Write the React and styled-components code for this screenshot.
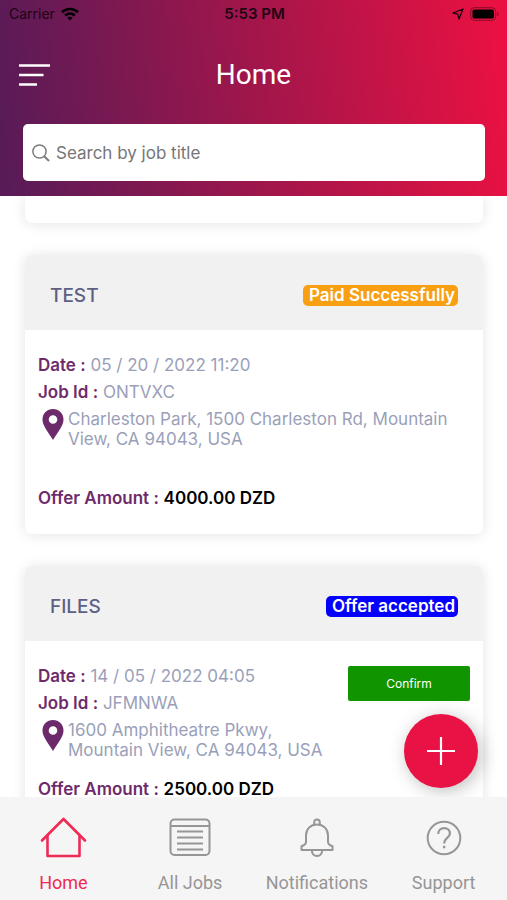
import React, { useState } from "react";
import styled, { createGlobalStyle } from "styled-components";

const jobs = [
  {
    id: "ONTVXC",
    title: "TEST",
    status: "Paid Successfully",
    statusColor: "#f99f12",
    date: "05 / 20 / 2022 11:20",
    address: "Charleston Park, 1500 Charleston Rd, Mountain View, CA 94043, USA",
    amount: "4000.00 DZD",
    canConfirm: false,
  },
  {
    id: "JFMNWA",
    title: "FILES",
    status: "Offer accepted",
    statusColor: "#0500fb",
    date: "14 / 05 / 2022 04:05",
    address: "1600 Amphitheatre Pkwy, Mountain View, CA 94043, USA",
    amount: "2500.00 DZD",
    canConfirm: true,
  },
];

const HomeIcon = () => (
  <svg width="48" height="42" viewBox="0 0 48 42" fill="none" stroke="currentColor" strokeWidth="2.6" strokeLinecap="round" strokeLinejoin="round">
    <path d="M3 23.500 24.500 2 46 23.500" />
    <path d="M8.500 19V39H40.500V19" />
  </svg>
);

const JobsIcon = () => (
  <svg width="42" height="42" viewBox="0 0 42 42" fill="none" stroke="currentColor" strokeWidth="2">
    <rect x="1.500" y="2.500" width="39" height="35.500" rx="4" />
    <path d="M1.500 9h39" />
    <path d="M8 14.500h26M8 20.500h26M8 26.500h26M8 32.500h26" strokeWidth="2.200" />
  </svg>
);

const BellIcon = () => (
  <svg width="36" height="42" viewBox="0 0 36 42" fill="none" stroke="currentColor" strokeWidth="2" strokeLinejoin="round">
    <path d="M15.200 8.500V5.200a2.800 2.800 0 0 1 5.600 0v3.300" />
    <path d="M18 7.500c-6.500 0-11 4.600-11 11v6.500c0 2-1 3-4.500 4.200v3.800h31v-3.800C30 28 29 27 29 25v-6.500c0-6.400-4.500-11-11-11z" />
    <path d="M12.800 33c0 3.400 2.100 6 5.200 6s5.200-2.600 5.200-6" />
  </svg>
);

const SupportIcon = () => (
  <svg width="36" height="42" viewBox="0 0 36 42" fill="none" stroke="currentColor" strokeWidth="2">
    <circle cx="18" cy="21" r="16.300" />
    <path d="M12.200 17c0-3.500 2.500-5.800 5.900-5.800s5.800 2.200 5.800 5.200c0 4.600-5.800 4.600-5.800 10" strokeWidth="2.200" />
    <path d="M18.100 28.800v2.500" strokeWidth="2.400" />
  </svg>
);

const tabs = [
  { name: "Home", Icon: HomeIcon },
  { name: "All Jobs", Icon: JobsIcon },
  { name: "Notifications", Icon: BellIcon },
  { name: "Support", Icon: SupportIcon },
];

function JobCard({ job }) {
  return (
    <Card>
      <CardHeader>
        <CardTitle>{job.title}</CardTitle>
        <Badge $color={job.statusColor}>{job.status}</Badge>
      </CardHeader>
      <CardBody>
        <Details>
          <Row>
            <Label>Date :</Label> {job.date}
          </Row>
          <Row>
            <Label>Job Id :</Label> {job.id}
          </Row>
          <Address $compact={job.canConfirm}>
            <svg width="22" height="31" viewBox="0 0 22 31">
              <path
                fill="#6c2a6b"
                fillRule="evenodd"
                d="M11 0C5 0 .5 4.600.5 10.500.5 17 6 22.500 11 31c5-8.500 10.500-14 10.500-20.500C21.500 4.600 17 0 11 0zm0 6.200a4.300 4.300 0 1 1 0 8.600 4.300 4.300 0 0 1 0-8.600z"
              />
            </svg>
            <span>{job.address}</span>
          </Address>
          <Row>
            <Label>Offer Amount :</Label> <Amount>{job.amount}</Amount>
          </Row>
        </Details>
        {job.canConfirm && <ConfirmButton type="button">Confirm</ConfirmButton>}
      </CardBody>
    </Card>
  );
}

export default function App() {
  const [search, setSearch] = useState("");
  const [active, setActive] = useState("Home");

  return (
    <Screen>
      <GlobalStyle />
      <Header>
        <StatusBar>
          <StatusSide>
            Carrier
            <svg width="18" height="14" viewBox="0 0 18 14" fill="none" stroke="#000" strokeWidth="2.600">
              <path d="M1 5.200c4.500-4.300 11.500-4.300 16 0" />
              <path d="M4.200 8.500c2.800-2.600 6.800-2.600 9.600 0" />
              <path d="M9 13.500 6.300 10.800c1.500-1.400 3.900-1.400 5.400 0z" fill="#000" stroke="none" />
            </svg>
          </StatusSide>
          <Clock>5:53 PM</Clock>
          <StatusSide $end>
            <svg width="12" height="12" viewBox="0 0 12 12" fill="none" stroke="#1c0414" strokeWidth="1.300" strokeLinejoin="round">
              <path d="M11 1 7 11 5.800 6.200 1 5z" />
            </svg>
            <svg width="30" height="14" viewBox="0 0 30 14">
              <rect x=".7" y=".7" width="25" height="12.600" rx="3.500" fill="none" stroke="#000" strokeOpacity=".4" />
              <rect x="2.500" y="2.500" width="21.500" height="9" rx="1.800" />
              <path d="M27.300 4.800c1.700.7 1.700 3.700 0 4.400z" fillOpacity=".45" />
            </svg>
          </StatusSide>
        </StatusBar>
        <TitleBar>
          <MenuButton type="button" aria-label="Menu">
            <svg width="32" height="24" viewBox="0 0 32 24" stroke="#fff" strokeWidth="2.500">
              <path d="M0 2.500h31M0 12h24.500M0 21.500h18" />
            </svg>
          </MenuButton>
          <Title>Home</Title>
        </TitleBar>
        <SearchBox>
          <svg width="18" height="18" viewBox="0 0 18 18" fill="none" stroke="#7c7c7c" strokeWidth="1.500">
            <circle cx="7.500" cy="7.500" r="6.600" />
            <path d="m12.200 12.200 4.800 4.800" strokeWidth="2" />
          </svg>
          <SearchInput
            type="text"
            aria-label="Search by job title"
            placeholder="Search by job title"
            value={search}
            onChange={(e) => setSearch(e.target.value)}
          />
        </SearchBox>
      </Header>

      <Content>
        <List>
          <CardEnd />
          {jobs.map((job) => (
            <JobCard key={job.id} job={job} />
          ))}
        </List>
        <AddButton type="button" aria-label="Add job">
          <svg width="30" height="30" viewBox="0 0 30 30" stroke="#fff" strokeWidth="2.200">
            <path d="M15 1v28M1 15h28" />
          </svg>
        </AddButton>
      </Content>

      <TabBar>
        {tabs.map(({ name, Icon }) => (
          <Tab key={name} type="button" $active={active === name} onClick={() => setActive(name)}>
            <Icon />
            {name}
          </Tab>
        ))}
      </TabBar>
    </Screen>
  );
}

const GlobalStyle = createGlobalStyle`
  * {
    box-sizing: border-box;
  }
  body {
    margin: 0;
    background: #fff;
    font-family: Inter, "Liberation Sans", sans-serif;
  }
  svg {
    flex-shrink: 0;
  }
`;

const Screen = styled.div`
  display: flex;
  flex-direction: column;
  height: 100vh;
`;

const Header = styled.header`
  flex-shrink: 0;
  padding-bottom: 15px;
  background: linear-gradient(83deg, #591b57 2%, #a0164b 50%, #ea1142 98%);
`;

const StatusBar = styled.div`
  display: grid;
  grid-template-columns: 1fr auto 1fr;
  align-items: center;
  height: 27px;
  padding: 0 7px 0 9px;
  font-size: 14px;
  color: #1c0414;
`;

const StatusSide = styled.div`
  display: flex;
  align-items: center;
  gap: 6px;
  justify-content: ${(p) => (p.$end ? "flex-end" : "flex-start")};
`;

const Clock = styled.span`
  font-size: 15px;
  font-weight: 600;
`;

const TitleBar = styled.div`
  display: grid;
  grid-template-columns: 1fr auto 1fr;
  align-items: center;
  height: 97px;
  padding: 0 19px 2px;
`;

const MenuButton = styled.button`
  display: flex;
  justify-self: start;
  padding: 0;
  border: 0;
  background: none;
  cursor: pointer;
`;

const Title = styled.h1`
  margin: 0;
  font-family: Roboto, sans-serif;
  font-size: 28px;
  font-weight: 400;
  color: #fff;
`;

const SearchBox = styled.div`
  display: flex;
  align-items: center;
  gap: 6px;
  height: 57px;
  margin: 0 22px 0 23px;
  padding: 0 9px;
  border-radius: 5px;
  background: #fff;
`;

const SearchInput = styled.input`
  flex: 1;
  min-width: 0;
  padding: 0;
  border: 0;
  outline: 0;
  background: none;
  font: inherit;
  font-size: 17px;
  color: #333;

  &::placeholder {
    color: #767676;
    opacity: 1;
  }
`;

const Content = styled.main`
  position: relative;
  flex: 1;
  min-height: 0;
`;

const List = styled.div`
  display: flex;
  flex-direction: column;
  gap: 32px;
  height: 100%;
  padding: 0 24px 0 25px;
  overflow-y: auto;
  scrollbar-width: none;
`;

const Card = styled.article`
  flex-shrink: 0;
  border-radius: 7px;
  background: #fff;
  box-shadow: 0 1px 14px rgba(0, 0, 0, 0.11);
`;

const CardEnd = styled(Card)`
  height: 27px;
  border-radius: 0 0 7px 7px;
`;

const CardHeader = styled.div`
  display: flex;
  align-items: center;
  justify-content: space-between;
  height: 75px;
  padding: 6px 25px 0;
  border-radius: 7px 7px 0 0;
  background: #f1f1f1;
`;

const CardTitle = styled.h2`
  margin: 0;
  font-size: 19px;
  font-weight: 500;
  color: #5e5f85;
`;

const Badge = styled.span`
  padding: 0 3px 0 6px;
  border-radius: 5px;
  background: ${(p) => p.$color};
  font-size: 17px;
  font-weight: 600;
  line-height: 21px;
  color: #fff;
`;

const CardBody = styled.div`
  display: flex;
  align-items: flex-start;
  gap: 24px;
  padding: 22px 13px;
`;

const Details = styled.div`
  flex: 1;
  min-width: 0;
  font-size: 17px;
  color: #9a9fb9;
`;

const Row = styled.div`
  line-height: 27px;
`;

const Label = styled.span`
  font-weight: 600;
  color: #6e2b6c;
`;

const Amount = styled.strong`
  font-weight: 600;
  color: #000;
`;

const Address = styled.div`
  display: flex;
  gap: 4px;
  margin-bottom: ${(p) => (p.$compact ? "16px" : "36px")};
  padding: 3px 0 0 4px;
  line-height: 20px;
`;

const ConfirmButton = styled.button`
  width: 122px;
  height: 35px;
  margin-top: 3px;
  border: 0;
  border-radius: 2px;
  background: #109400;
  font: inherit;
  font-size: 12px;
  color: #fff;
  cursor: pointer;
`;

const AddButton = styled.button`
  position: absolute;
  right: 29px;
  bottom: 9px;
  display: flex;
  align-items: center;
  justify-content: center;
  width: 74px;
  height: 74px;
  padding: 0;
  border: 0;
  border-radius: 50%;
  background: #e91245;
  box-shadow: 3px 3px 18px rgba(0, 0, 0, 0.26);
  cursor: pointer;
`;

const TabBar = styled.nav`
  position: relative;
  display: grid;
  grid-template-columns: repeat(4, 1fr);
  flex-shrink: 0;
  height: 103px;
  background: #f5f5f5;
`;

const Tab = styled.button`
  display: flex;
  flex-direction: column;
  align-items: center;
  gap: 13px;
  padding: 20px 0 0;
  border: 0;
  background: none;
  font-family: Roboto, sans-serif;
  font-size: 18px;
  line-height: 22px;
  color: ${(p) => (p.$active ? "#ee2a55" : "#969696")};
  cursor: pointer;
`;
